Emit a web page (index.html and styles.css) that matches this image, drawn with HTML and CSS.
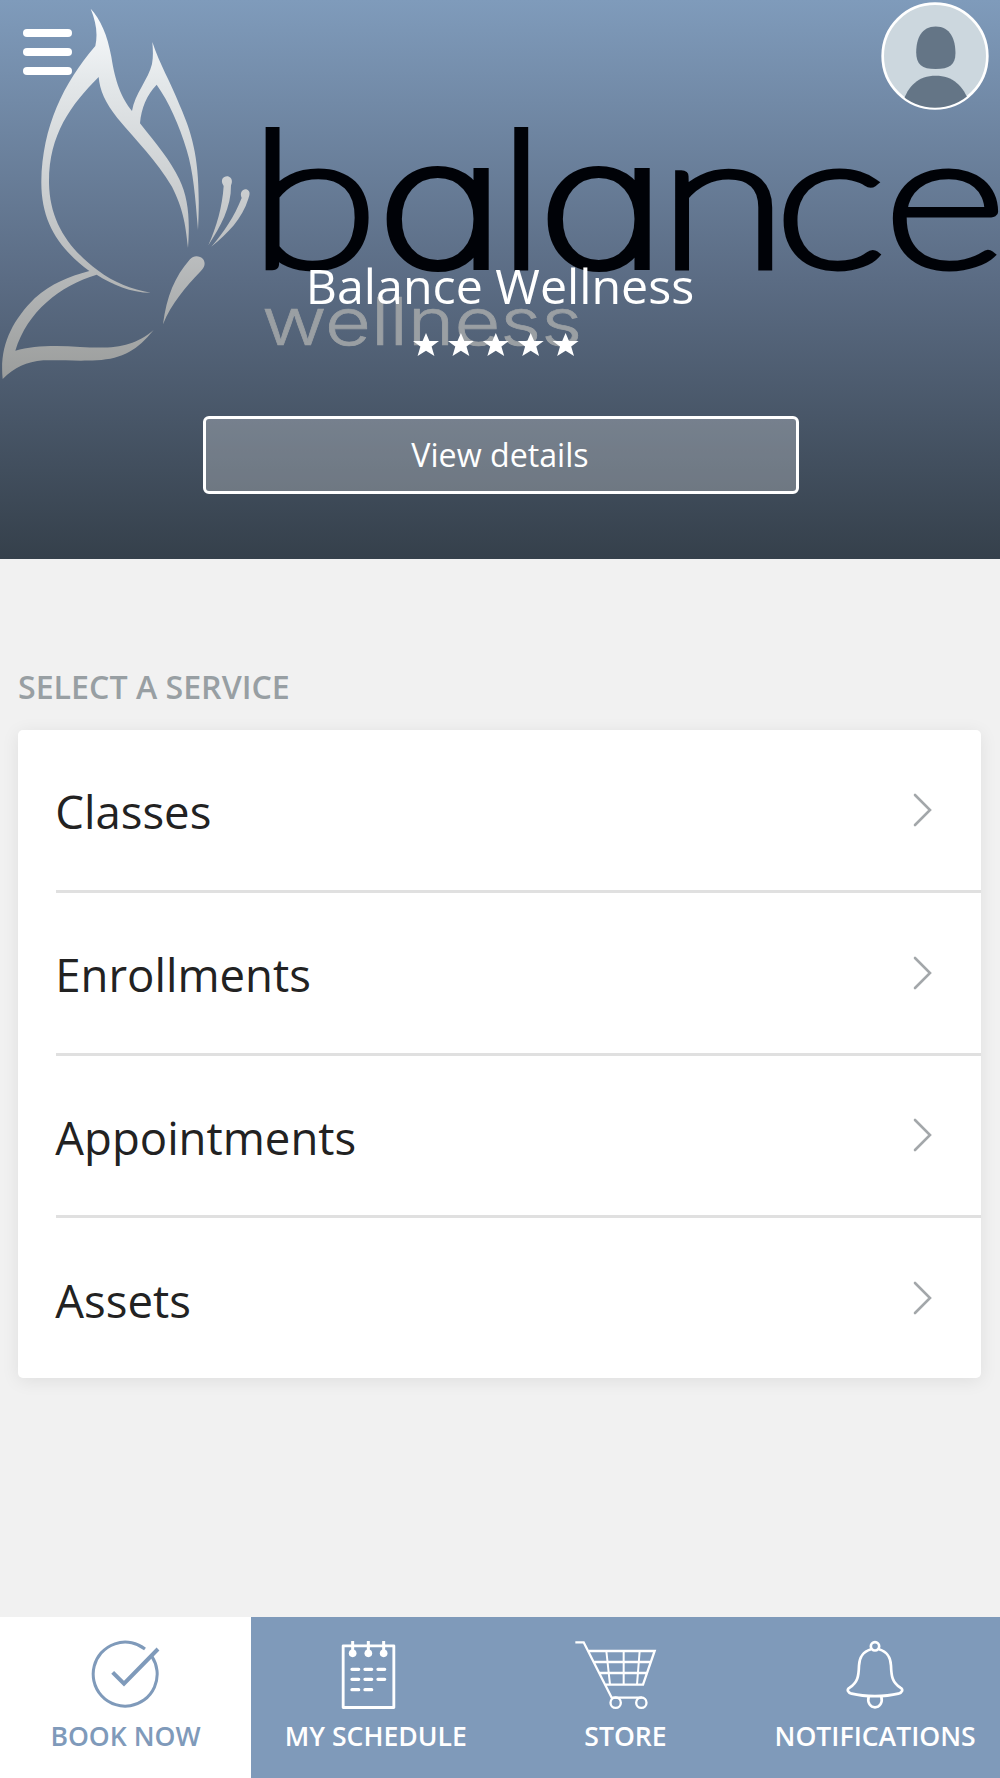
FILE: index.html
```html
<!DOCTYPE html>
<html lang="en">
<head>
<meta charset="utf-8">
<title>Balance Wellness</title>
<link rel="stylesheet" href="styles.css">
</head>
<body>
<div class="app">
  <header class="hero">
    <svg class="hero-logo" viewBox="0 0 1000 559" aria-hidden="true">
      <defs>
        <linearGradient id="silver" gradientUnits="userSpaceOnUse" x1="0" y1="20" x2="0" y2="1130">
          <stop offset="0" stop-color="#fbfdff"/>
          <stop offset=".2" stop-color="#e4e8ea"/>
          <stop offset=".55" stop-color="#c6c9cb"/>
          <stop offset="1" stop-color="#9b9d9c"/>
        </linearGradient>
      </defs>
      <g transform="scale(.33333)" fill="url(#silver)">
        <path d="M272 26C302 58 322 105 334 170C346 248 364 292 396 333C404 282 446 236 456 192C460 170 459 150 457 126C480 195 508 238 540 318C580 410 604 490 594 690C586 590 580 515 560 450C538 375 506 305 470 254C440 285 424 325 420 370C472 436 510 480 538 538C566 596 570 660 564 744C556 665 548 625 516 560C468 480 412 426 352 354C316 308 299 270 296 231C212 315 146 405 147 548C149 665 206 745 292 810C345 850 395 867 452 878C392 878 338 854 290 824C180 857 82 934 46 1052C100 1036 175 1036 240 1041C350 1047 400 1040 461 990C412 1050 370 1076 290 1081C230 1084 190 1080 130 1081C78 1086 45 1102 8 1137C-2 1040 34 965 104 895C155 850 205 830 268 813C176 745 123 665 124 545C127 380 190 250 286 138C294 100 288 66 272 26Z"/>
        <path d="M489 973C500 890 524 830 570 778C582 764 600 768 609 777C618 790 614 802 602 814C556 862 515 910 489 973Z"/>
        <path d="M625 736C650 680 667 620 671 558C658 538 672 527 684 529C697 533 698 546 693 556C694 622 661 681 625 736Z"/>
        <path d="M634 740C672 696 703 650 725 594C718 577 728 566 739 568C753 573 749 586 745 596C727 656 682 701 634 740Z"/>
      </g>
      <text class="logo-word" transform="scale(1.26 1)" y="266"><tspan x="198">b</tspan><tspan class="round-a" x="300">a</tspan><tspan x="394.200">l</tspan><tspan class="round-a" x="427.700">a</tspan><tspan x="523 614.900 701.500">nce</tspan></text>
      <text class="logo-sub" x="262" y="345" textLength="320" lengthAdjust="spacingAndGlyphs">wellness</text>
    </svg>
    <div class="topbar">
      <button class="menu" aria-label="Menu"><span></span><span></span><span></span></button>
      <svg class="avatar" viewBox="0 0 322 322" role="img" aria-label="Profile">
        <defs><clipPath id="face"><circle cx="161" cy="161" r="154"/></clipPath></defs>
        <circle cx="161" cy="161" r="156" fill="#ccd7de" stroke="#fff" stroke-width="8"/>
        <g clip-path="url(#face)" fill="#647586">
          <path d="M163 73C207 73 222 112 222 153C222 187 204 200 163 200C122 200 105 187 105 150C105 109 121 73 163 73Z"/>
          <path d="M65 300C80 250 112 220 163 220C214 220 246 250 263 300V322H65Z"/>
        </g>
      </svg>
    </div>
    <h1 class="title">Balance Wellness</h1>
    <svg class="stars" viewBox="0 0 168 24" role="img" aria-label="5 stars">
      <defs><path id="star" d="M13 0L16.400 8H26L18.600 13.600L21.400 23L13 17.700L4.600 23L7.400 13.600L0 8H9.600Z"/></defs>
      <use href="#star"/><use href="#star" x="34.900"/><use href="#star" x="69.800"/><use href="#star" x="104.700"/><use href="#star" x="139.600"/>
    </svg>
    <button class="details">View details</button>
  </header>

  <main class="services">
    <h2 class="heading">SELECT A SERVICE</h2>
    <ul class="list">
      <li class="row"><span>Classes</span><svg class="chevron" viewBox="0 0 20 34"><path d="M2 2L17 17L2 32"/></svg></li>
      <li class="row"><span>Enrollments</span><svg class="chevron" viewBox="0 0 20 34"><path d="M2 2L17 17L2 32"/></svg></li>
      <li class="row"><span>Appointments</span><svg class="chevron" viewBox="0 0 20 34"><path d="M2 2L17 17L2 32"/></svg></li>
      <li class="row"><span>Assets</span><svg class="chevron" viewBox="0 0 20 34"><path d="M2 2L17 17L2 32"/></svg></li>
    </ul>
  </main>

  <nav class="tabs">
    <a class="tab active">
      <svg class="icon" viewBox="219 120 312 210">
        <path stroke-width="9" d="M432 147A96 96 0 1 0 453 170"/>
        <path stroke-width="12" d="M335 217L369 251L471 147"/>
      </svg>
      <span>BOOK NOW</span>
    </a>
    <a class="tab">
      <svg class="icon" viewBox="971 120 312 210">
        <rect x="1028.500" y="137.500" width="152" height="185" stroke-width="8.500" stroke-linejoin="round"/>
        <path stroke-width="9" d="M1057 123V160M1104 123V160M1150 123V160"/>
        <g fill="currentColor" stroke="none"><circle cx="1057" cy="160" r="11.500"/><circle cx="1104" cy="160" r="11.500"/><circle cx="1150" cy="160" r="11.500"/></g>
        <path stroke-width="10" stroke-linecap="round" d="M1055 208H1075M1094 208H1114M1133 208H1153M1055 238H1075M1094 238H1114M1133 238H1153M1055 269H1075M1094 269H1114"/>
      </svg>
      <span>MY SCHEDULE</span>
    </a>
    <a class="tab">
      <svg class="icon" viewBox="219 120 312 210" stroke-width="7">
        <path d="M226 127H251L335 293H425M264 153H464L429 254H316M283 186H452M299 219H440"/>
        <path stroke-width="6" d="M319 153L330 254M371 153V254M419 153L411 254"/>
        <circle cx="347" cy="308" r="15.500"/><circle cx="424" cy="308" r="15.500"/>
      </svg>
      <span>STORE</span>
    </a>
    <a class="tab">
      <svg class="icon" viewBox="969 120 312 210" stroke-width="8">
        <circle cx="1125" cy="139" r="12.500"/>
        <path d="M1113 148C1085 157 1078 174 1077 197C1076 230 1073 247 1049 263C1039 269 1043 277 1055 281C1095 291 1155 291 1195 281C1207 277 1211 269 1201 263C1177 247 1174 230 1173 197C1172 174 1165 157 1137 148"/>
        <path d="M1106 290C1101 309 1112 322 1125 322C1138 322 1149 309 1144 290"/>
      </svg>
      <span>NOTIFICATIONS</span>
    </a>
  </nav>
</div>
</body>
</html>
```
FILE: styles.css
```css
* { box-sizing: border-box; }

body {
  margin: 0;
  background: #f1f1f1;
  font-family: "Open Sans", "Noto Sans", sans-serif;
}

button { font: inherit; color: inherit; }

.app {
  display: flex;
  flex-direction: column;
  width: 1000px;
  height: 1778px;
}

/* Hero */
.hero {
  position: relative;
  display: flex;
  flex-direction: column;
  align-items: center;
  height: 559px;
  color: #fff;
  background: linear-gradient(#7f9bbb, #5b6c84 50%, #35404b);
}

.hero-logo {
  position: absolute;
  inset: 0;
  width: 1000px;
  height: 559px;
}

.logo-word {
  font-family: Lato, sans-serif;
  font-size: 187px;
  font-weight: 100;
  fill: #000207;
  stroke: #000207;
  stroke-width: 8.800px;
}

.round-a {
  font-family: Inter, sans-serif;
  font-size: 173px;
  font-feature-settings: "cv11";
  stroke-width: 8.200px;
}

.logo-sub {
  font-family: Inter, sans-serif;
  font-size: 66px;
  font-weight: 300;
  fill: #9a9fa3;
  stroke: #9a9fa3;
  stroke-width: .7px;
}

.topbar {
  position: relative;
  display: flex;
  justify-content: space-between;
  align-items: flex-start;
  width: 100%;
  height: 252px;
  padding: 2px 11px 0 23px;
}

.menu {
  display: flex;
  flex-direction: column;
  gap: 11px;
  margin-top: 27px;
  padding: 0;
  border: 0;
  background: none;
}

.menu span {
  width: 48.500px;
  height: 8px;
  border-radius: 4px;
  background: #fff;
}

.avatar { width: 108px; height: 108px; }

.title {
  position: relative;
  margin: 0;
  font-size: 48.300px;
  line-height: 66px;
  font-weight: 400;
}

.stars {
  position: relative;
  width: 168px;
  height: 24px;
  margin: 15px 6.500px 0 0;
  fill: #fff;
}

.details {
  position: relative;
  width: 596px;
  height: 78px;
  margin: 58.500px 0 0 2px;
  padding: 0 2px 1px 0;
  border: 3px solid #fff;
  border-radius: 6px;
  background: rgba(255, 255, 255, .25);
  font-size: 32.200px;
}

/* Services */
.services {
  flex: 1;
  padding: 106px 19px 0 18px;
}

.heading {
  margin: 0 0 21px;
  font-size: 32.150px;
  line-height: 44px;
  font-weight: 600;
  color: #989fa3;
}

.list {
  margin: 0;
  padding: 0 0 0 38px;
  list-style: none;
  border-radius: 5px;
  background: #fff;
  box-shadow: 0 3px 18px rgba(0, 0, 0, .08);
}

.row {
  display: flex;
  align-items: center;
  justify-content: space-between;
  height: 162.800px;
  padding-right: 48px;
  font-size: 45.500px;
  color: #222;
}

.row span { margin-left: -.7px; padding-top: 3px; }

.row:not(:last-child) { border-bottom: 3px solid #e0e0e0; }

.row:last-child { height: 159.600px; }

.chevron {
  width: 20px;
  height: 34px;
  fill: none;
  stroke: #a3a7aa;
  stroke-width: 2.600;
  stroke-linecap: round;
}

/* Bottom navigation */
.tabs {
  display: grid;
  grid-template-columns: 251px repeat(3, 1fr);
  height: 161px;
  color: #fff;
  background: #7f9aba;
}

.tab {
  display: flex;
  flex-direction: column;
  align-items: center;
  gap: 8px;
  padding-top: 23px;
  font-size: 26.600px;
  line-height: 36px;
  font-weight: 600;
  white-space: nowrap;
}

.active { color: #7f9aba; background: #fff; }

.icon {
  width: 104px;
  height: 70px;
  fill: none;
  stroke: currentColor;
}
```
